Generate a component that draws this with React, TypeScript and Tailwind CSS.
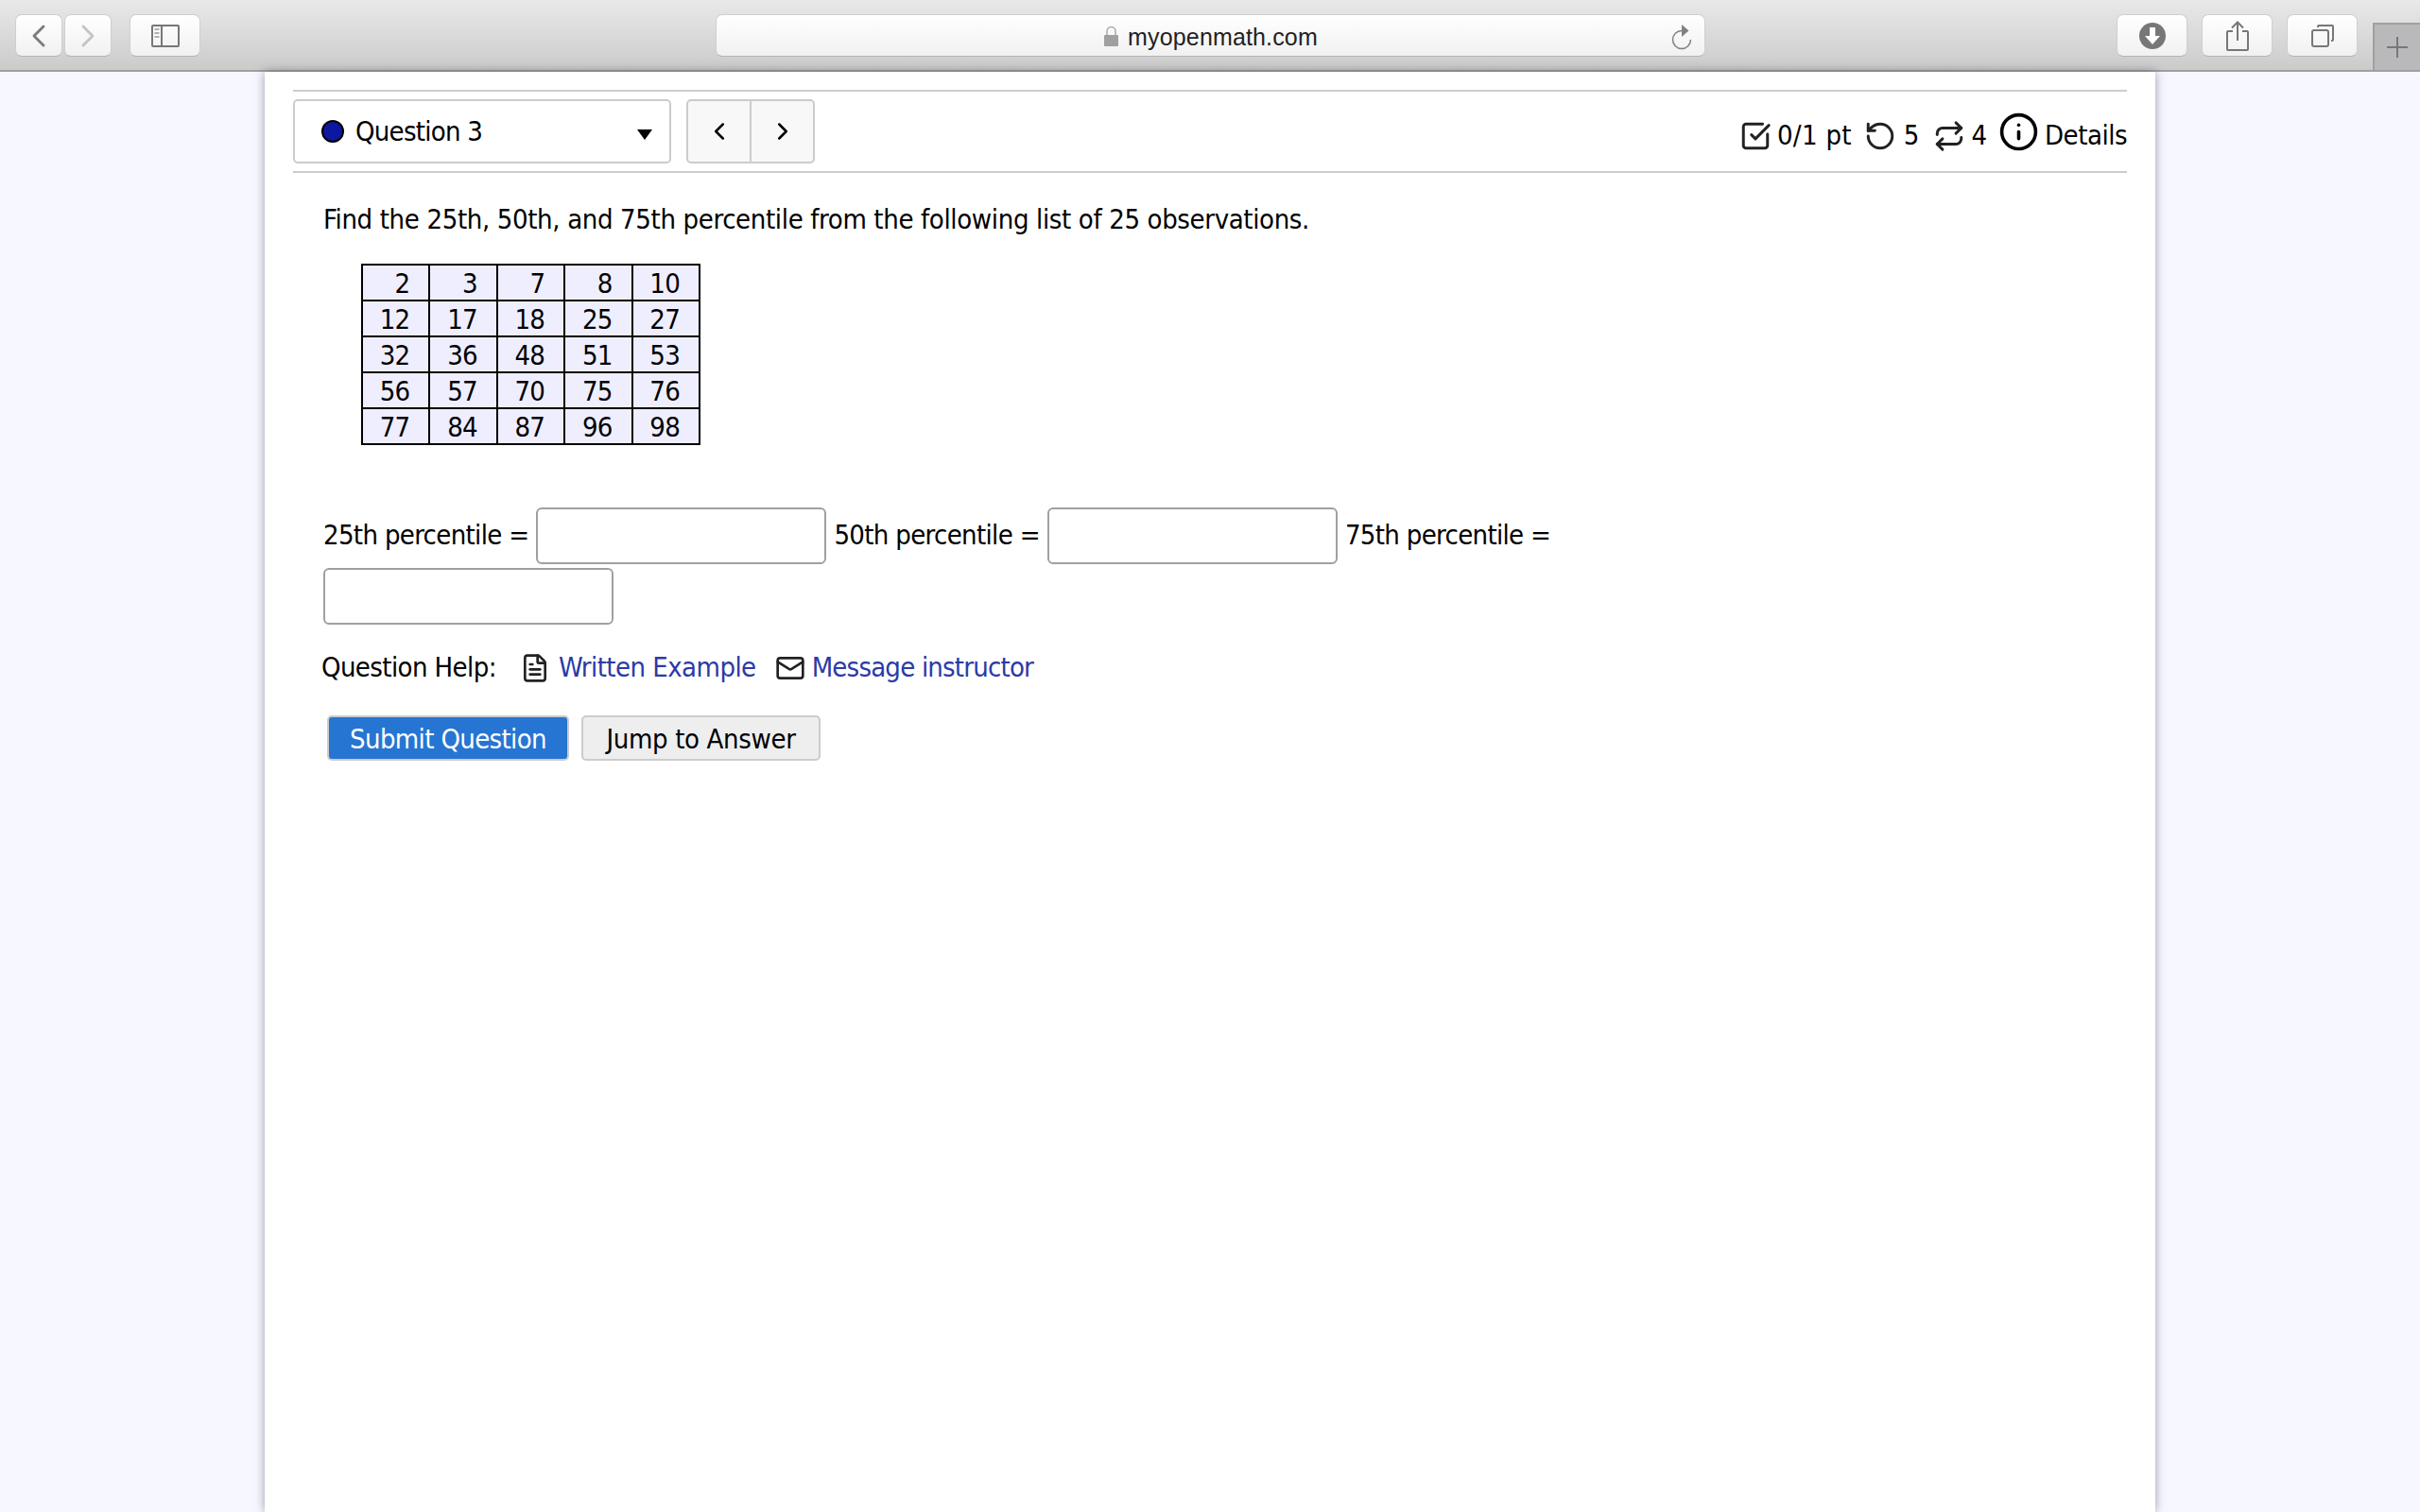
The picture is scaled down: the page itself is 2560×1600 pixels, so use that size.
import React from "react";
import { SquareCheckBig, RotateCcw, Repeat, Info, FileText, Mail, ChevronLeft, ChevronRight } from "lucide-react";

const rows = [
  [2, 3, 7, 8, 10],
  [12, 17, 18, 25, 27],
  [32, 36, 48, 51, 53],
  [56, 57, 70, 75, 76],
  [77, 84, 87, 96, 98],
];

const tb = "h-[45px] rounded-[7px] border border-[#cfcfcf] border-b-[#b5b5b5] bg-gradient-to-b from-white to-[#f1f1f1] flex items-center justify-center shrink-0";

function Toolbar() {
  return (
    <div className="h-[76px] border-b-2 border-[#a0a0a0] bg-gradient-to-b from-[#e9e9e9] to-[#cbcbcb] flex items-start pt-[15px] pl-[16px] shrink-0">
      <div className={tb + " w-[50px]"}><ChevronLeft size={40} strokeWidth={1.7} className="text-[#7c7c7c]" /></div>
      <div className={tb + " w-[50px] ml-[2px]"}><ChevronRight size={40} strokeWidth={1.7} className="text-[#c4c4c4]" /></div>
      <div className={tb + " w-[75px] ml-[19px]"}>
        <svg width="32" height="26" viewBox="0 0 32 26" fill="none" stroke="#777" strokeWidth="2">
          <rect x="2" y="2" width="28" height="22" rx="1" />
          <path d="M12 2v22" />
          <path d="M4.5 6h5M4.5 10h5M4.5 14h5" strokeWidth="1.6" stroke="#999" />
        </svg>
      </div>
      <div className={tb + " relative w-[1047px] ml-[545px] font-['Liberation_Sans',sans-serif] text-[25px] text-[#222] pt-[4px]"}>
        <svg width="17" height="22" viewBox="0 0 17 22" className="mr-[9px] mb-[4px]">
          <path d="M4 10V6a4.500 4.500 0 0 1 9 0v4" fill="none" stroke="#a8a8a8" strokeWidth="1.5" />
          <rect x="1" y="10" width="15" height="12" rx="1" fill="#a0a0a0" />
        </svg>
        <span className="tracking-[0.15px]">myopenmath.com</span>
        <svg width="22" height="32" viewBox="0 0 22 32" fill="none" className="absolute right-[13px] top-[6px]">
          <path d="M11 10.500A9.500 9.500 0 1 0 20.500 20" stroke="#808080" strokeWidth="1.5" />
          <path d="M11 4l7.500 6.500L11 17z" fill="#808080" />
        </svg>
      </div>
      <div className={tb + " w-[75px] ml-[435px]"}>
        <svg width="30" height="30" viewBox="0 0 30 30">
          <circle cx="15" cy="15" r="14" fill="#777" />
          <path d="M12 6h6v9h5l-8 9-8-9h5z" fill="#fff" />
        </svg>
      </div>
      <div className={tb + " w-[75px] ml-[15px]"}>
        <svg width="24" height="32" viewBox="0 0 24 32" fill="none" stroke="#777" strokeWidth="2">
          <path d="M7 11H2a1 1 0 0 0-1 1v18a1 1 0 0 0 1 1h20a1 1 0 0 0 1-1V12a1 1 0 0 0-1-1h-5" />
          <path d="M12 21V2M6 7.500 12 1.500l6 6" />
        </svg>
      </div>
      <div className={tb + " w-[75px] ml-[15px]"}>
        <svg width="26" height="26" viewBox="0 0 26 26" fill="none" stroke="#777" strokeWidth="2">
          <rect x="2" y="7" width="17" height="17" rx="2" />
          <path d="M8 4V3a1 1 0 0 1 1-1h14a1 1 0 0 1 1 1v14a1 1 0 0 1-1 1h-1" />
        </svg>
      </div>
      <div className="ml-[16px] mt-[9px] w-[50px] h-[50px] bg-[#b9b8bb] border-t-2 border-l-2 border-[#a0a0a0] flex items-center justify-center">
        <svg width="24" height="24" viewBox="0 0 24 24" stroke="#777" strokeWidth="2"><path d="M12 1v22M1 12h22" /></svg>
      </div>
    </div>
  );
}

function PctInput() {
  return <input className="w-[307px] h-[60px] rounded-[6px] border-2 border-[#a0a0a0] bg-white shrink-0" />;
}

export default function App() {
  return (
    <div className="min-h-[1600px] h-[1600px] flex flex-col bg-[#f7f8ff] overflow-hidden font-['DejaVu_Sans_Condensed','DejaVu_Sans',sans-serif] text-[29px] text-black">
      <Toolbar />
      <div className="flex-1 flex justify-center">
        <main className="w-[2000px] bg-white shadow-[0_0_10px_rgba(60,60,80,0.5)] px-[30px] pt-[19px]">
          <div className="border-t-2 border-b-2 border-[#cccccc] h-[88px] flex items-start pt-[8px]">
            <div className="w-[400px] h-[68px] rounded-[5px] border-2 border-[#cccccc] flex items-center pl-[28px] relative">
              <span className="w-[24px] h-[24px] rounded-full bg-[#0b189f] border-2 border-black" />
              <span className="ml-[12px] tracking-[-0.75px] pt-[2px]">Question 3</span>
              <svg className="absolute right-[18px] top-[30px]" width="16" height="11" viewBox="0 0 16 11"><path d="M0 0h16l-8 11z" fill="#000" /></svg>
            </div>
            <div className="ml-[16px] w-[136px] h-[68px] rounded-[5px] border-2 border-[#cccccc] bg-[#f8f8f8] flex">
              <div className="w-[67px] border-r-2 border-[#cccccc] flex items-center justify-center"><ChevronLeft size={30} strokeWidth={2} /></div>
              <div className="flex-1 flex items-center justify-center"><ChevronRight size={30} strokeWidth={2} /></div>
            </div>
            <div className="ml-auto mt-[18px] flex items-center h-[42px]">
              <SquareCheckBig size={34} strokeWidth={2.1} className="text-[#222]" />
              <span className="ml-[6px] tracking-[0.3px]">0/1 pt</span>
              <RotateCcw size={34} strokeWidth={2.1} className="ml-[13px] text-[#222]" />
              <span className="ml-[8px]">5</span>
              <Repeat size={34} strokeWidth={2.1} className="ml-[15px] text-[#222]" />
              <span className="ml-[6px]">4</span>
              <Info size={43} strokeWidth={2} className="ml-[12px] mt-[-9px]" />
              <span className="ml-[6px] tracking-[-0.5px]">Details</span>
            </div>
          </div>

          <div className="pl-[32px]">
            <p className="mt-[30px] leading-[38px] tracking-[-0.36px]">Find the 25th, 50th, and 75th percentile from the following list of 25 observations.</p>
            <table className="ml-[40px] mt-[28px] border-collapse border-2 border-black bg-[#eeeeff]">
              <tbody>
                {rows.map((r, i) => (
                  <tr key={i}>
                    {r.map((c, j) => (
                      <td key={j} className="border-2 border-black w-[71.4px] h-[38px] p-0 pr-[20px] pt-[2px] text-right leading-none tracking-[-0.8px]">{c}</td>
                    ))}
                  </tr>
                ))}
              </tbody>
            </table>
            <div className="mt-[66px] flex items-center h-[60px]">
              <span className="tracking-[-0.67px]">25th percentile =</span>
              <span className="w-[8px]" />
              <PctInput />
              <span className="ml-[8px] tracking-[-0.67px]">50th percentile =</span>
              <span className="w-[8px]" />
              <PctInput />
              <span className="ml-[8px] tracking-[-0.67px]">75th percentile =</span>
            </div>
            <div className="mt-[4px] flex"><PctInput /></div>
            <div className="mt-[26px] ml-[-2px] flex items-center h-[40px]">
              <span className="tracking-[-0.6px]">Question Help:</span>
              <FileText size={32} strokeWidth={2} className="ml-[25px] text-[#222]" />
              <a className="ml-[9px] text-[#2c3aa8] tracking-[-0.55px]">Written Example</a>
              <Mail size={32} strokeWidth={2} className="ml-[20px] text-[#222]" />
              <a className="ml-[7px] text-[#2c3aa8] tracking-[-0.8px]">Message instructor</a>
            </div>
            <div className="mt-[30px] ml-[4px] flex gap-[13px]">
              <button className="w-[256px] h-[48px] rounded-[5px] border-2 border-[#cccccc] bg-[#2675d3] text-white tracking-[-0.65px] pt-[2px]">Submit Question</button>
              <button className="w-[253px] h-[48px] rounded-[5px] border-2 border-[#cccccc] bg-[#eeeeee] text-black tracking-[-0.35px] pt-[2px]">Jump to Answer</button>
            </div>
          </div>
        </main>
      </div>
    </div>
  );
}
